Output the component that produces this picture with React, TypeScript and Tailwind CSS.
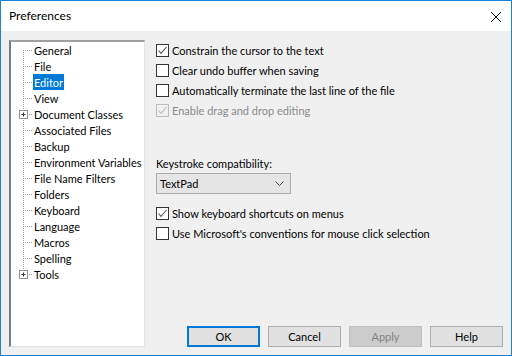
const items = [
  { label: "General" },
  { label: "File" },
  { label: "Editor", selected: true },
  { label: "View" },
  { label: "Document Classes", plus: true },
  { label: "Associated Files" },
  { label: "Backup" },
  { label: "Environment Variables" },
  { label: "File Name Filters" },
  { label: "Folders" },
  { label: "Keyboard" },
  { label: "Language" },
  { label: "Macros" },
  { label: "Spelling" },
  { label: "Tools", plus: true },
];

function Connector({ first, last, plus }: { first: boolean; last: boolean; plus?: boolean }) {
  const dots = (x1: number, y1: number, x2: number, y2: number) => {
    const out = [];
    if (x1 === x2) {
      for (let y = y1; y <= y2; y += 2) out.push(<rect key={"v" + y} x={x1} y={y} width={1} height={1} />);
    } else {
      for (let x = x1; x <= x2; x += 2) out.push(<rect key={"h" + x} x={x} y={y1} width={1} height={1} />);
    }
    return out;
  };
  return (
    <svg width="22" height="16" className="shrink-0">
      <g fill="#a0a0a0">
        {dots(12, first ? 8 : 0, 12, last ? 8 : 15)}
        {dots(14, 8, 20, 8)}
      </g>
      {plus && (
        <g>
          <rect x="8.5" y="4.5" width="8" height="8" fill="#fff" stroke="#919191" />
          <path d="M10.5 8.5h4M12.5 6.5v4" stroke="#333" />
        </g>
      )}
    </svg>
  );
}

function Check({ checked, disabled, label }: { checked?: boolean; disabled?: boolean; label: string }) {
  const c = disabled ? "#bcbcbc" : "#333333";
  return (
    <div className="flex items-center h-5">
      <svg width="13" height="13" className="shrink-0">
        <rect x="0.5" y="0.5" width="12" height="12" fill={disabled ? "#f0f0f0" : "#fff"} stroke={c} />
        {checked && <path d="M2.5 6.5l2.5 2.8L10.5 3" fill="none" stroke={disabled ? "#bcbcbc" : "#555"} strokeWidth="1.1" />}
      </svg>
      <span className={"ml-[3px] " + (disabled ? "text-[#8b8b8b]" : "text-black")}>{label}</span>
    </div>
  );
}

function Btn({ label, primary, disabled }: { label: string; primary?: boolean; disabled?: boolean }) {
  return (
    <button
      className={
        "w-[73px] h-[21px] flex items-center justify-center " +
        (primary
          ? "border-2 border-[#0078d7] bg-[#e1e1e1] text-black"
          : disabled
          ? "border border-[#bfbfbf] bg-[#cccccc] text-[#838383]"
          : "border border-[#adadad] bg-[#e1e1e1] text-black")
      }
    >
      {label}
    </button>
  );
}

export default function App() {
  return (
    <div
      className="w-[512px] h-[356px] border border-[#1883d7] bg-[#f0f0f0] flex flex-col text-[11px] leading-none text-black"
      style={{ fontFamily: 'Lato, "Segoe UI", sans-serif' }}
    >
      <div className="h-[30px] bg-white flex items-center justify-between pl-2 pr-[10px] shrink-0">
        <span className="text-[12px]">Preferences</span>
        <svg width="10" height="10" className="mt-[1px]">
          <path d="M0 0L10 10M10 0L0 10" stroke="#000" strokeWidth="1" />
        </svg>
      </div>
      <div className="flex-1 flex px-2 pt-[9px] pb-2">
        <div className="w-[136px] h-full bg-white border-t-2 border-l-2 border-t-[#a0a0a0] border-l-[#7a7a7a] border-b border-r border-b-[#e3e3e3] border-r-[#e3e3e3]">
          {items.map((it, i) => (
            <div key={it.label} className="flex items-center h-4 whitespace-nowrap">
              <Connector first={i === 0} last={i === items.length - 1} plus={it.plus} />
              <span
                className={
                  "h-4 flex items-center px-px " + (it.selected ? "bg-[#0078d7] text-white" : "")
                }
              >
                {it.label}
              </span>
            </div>
          ))}
        </div>
        <div className="flex-1 flex flex-col pl-[11px]">
          <div>
            <Check checked label="Constrain the cursor to the text" />
            <Check label="Clear undo buffer when saving" />
            <Check label="Automatically terminate the last line of the file" />
            <Check checked disabled label="Enable drag and drop editing" />
          </div>
          <div className="mt-[35px] h-4 flex items-center">Keystroke compatibility:</div>
          <div className="mt-[2px] w-[135px] h-[21px] bg-[#e5e5e5] border border-[#acacac] flex items-center justify-between pl-[3px] pr-[6px]">
            <span>TextPad</span>
            <svg width="9" height="5">
              <path d="M0.5 0.5l4 4 4-4" fill="none" stroke="#444" />
            </svg>
          </div>
          <div className="mt-[9px]">
            <Check checked label="Show keyboard shortcuts on menus" />
            <Check label="Use Microsoft's conventions for mouse click selection" />
          </div>
          <div className="mt-auto flex justify-end gap-[8px]">
            <Btn label="OK" primary />
            <Btn label="Cancel" />
            <Btn label="Apply" disabled />
            <Btn label="Help" />
          </div>
        </div>
      </div>
    </div>
  );
}
